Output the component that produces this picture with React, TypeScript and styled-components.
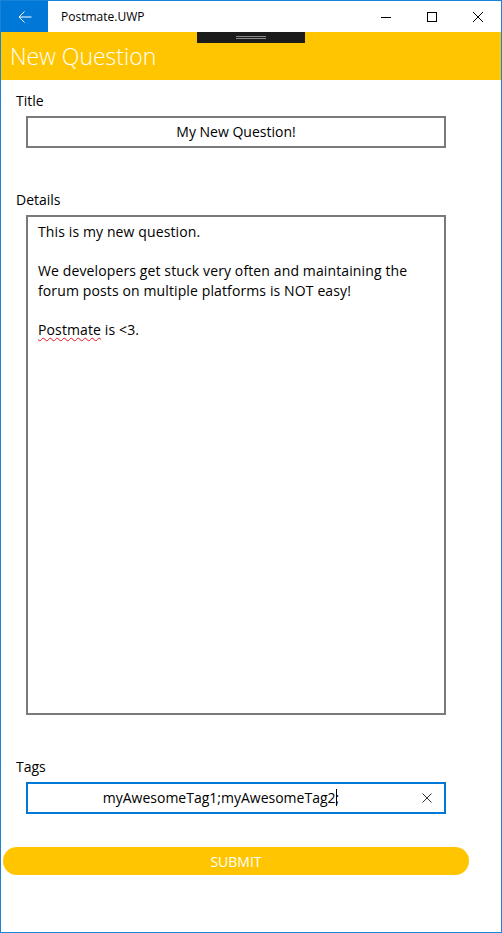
import React from "react";
import styled, { createGlobalStyle } from "styled-components";

const GlobalStyle = createGlobalStyle`
  html, body { margin: 0; padding: 0; background: #ffffff; }
  * { box-sizing: border-box; }
  body { font-family: "Open Sans", "Noto Sans", "DejaVu Sans", sans-serif; color: #000; }
`;

const Window = styled.div`
  position: relative;
  width: 502px;
  height: 933px;
  border: 1px solid #1883d7;
  background: #fff;
  display: flex;
  flex-direction: column;
  overflow: hidden;
`;

const TitleBar = styled.div`
  height: 31px;
  display: flex;
  align-items: stretch;
  background: #fff;
`;

const BackButton = styled.div`
  width: 47px;
  background: #0078d7;
  display: flex;
  align-items: center;
  justify-content: center;
`;

const AppTitle = styled.div`
  margin-left: 13px;
  font-size: 12px;
  line-height: 31px;
  color: #000;
  flex: 1;
`;

const CaptionButton = styled.div`
  width: 46px;
  display: flex;
  align-items: center;
  justify-content: center;
`;

const Header = styled.div`
  position: relative;
  height: 48px;
  background: #ffc500;
  display: flex;
  align-items: center;
  padding-left: 9px;
`;

const HeaderTitle = styled.h1`
  margin: 0;
  font-size: 23px;
  font-weight: 300;
  color: #fff;
  letter-spacing: 0;
`;

const Grip = styled.div`
  position: absolute;
  top: 0;
  left: 196px;
  width: 108px;
  height: 11px;
  background: #1b1b1b;
  display: flex;
  flex-direction: column;
  align-items: center;
  padding-top: 4px;
  gap: 1px;
`;

const GripLine = styled.div`
  width: 30px;
  height: 1px;
  background: #8a8a8a;
`;

const Content = styled.div`
  display: flex;
  flex-direction: column;
  padding: 11px 0 0 15px;
`;

const Label = styled.div<{ $top: number }>`
  margin-top: ${(p) => p.$top}px;
  font-size: 14px;
  line-height: 20px;
  height: 20px;
`;

const Field = styled.div<{ $focused?: boolean; $height: number }>`
  margin: 5px 0 0 10px;
  width: 420px;
  height: ${(p) => p.$height}px;
  border: 2px solid ${(p) => (p.$focused ? "#0078d7" : "#7a7a7a")};
  background: #fff;
  font-size: 14px;
`;

const SingleLine = styled(Field)`
  display: flex;
  align-items: center;
`;

const CenterText = styled.div`
  flex: 1;
  text-align: center;
  line-height: 20px;
  white-space: nowrap;
`;

const Caret = styled.span`
  display: inline-block;
  width: 1px;
  height: 17px;
  background: #000;
  vertical-align: -3px;
  margin-left: -3px;
`;

const ClearButton = styled.div`
  width: 30px;
  display: flex;
  align-items: center;
  justify-content: center;
  margin-right: 2px;
`;

const Multi = styled(Field)`
  padding: 5px 10px;
  line-height: 19.6px;
  letter-spacing: 0.12px;
`;

const Para = styled.p`
  margin: 0;
  min-height: 19.6px;
`;

const Misspelled = styled.span`
  text-decoration: underline wavy #e81123;
  text-decoration-thickness: 1px;
  text-underline-offset: 2px;
`;

const SubmitButton = styled.button`
  margin: 33px 0 0 2px;
  width: 466px;
  height: 28px;
  border: none;
  border-radius: 14px;
  background: #ffc500;
  color: #fff;
  font-family: inherit;
  font-size: 14px;
  padding: 0;
`;

const SubmitRow = styled.div`
  display: flex;
`;

export default function App() {
  return (
    <>
      <GlobalStyle />
      <Window>
        <TitleBar>
          <BackButton>
            <svg width="14" height="12" viewBox="0 0 14 12" fill="none">
              <path d="M13.5 6H1M6.5 0.5L1 6L6.5 11.5" stroke="#fff" strokeWidth="1" />
            </svg>
          </BackButton>
          <AppTitle>Postmate.UWP</AppTitle>
          <CaptionButton>
            <svg width="10" height="10" viewBox="0 0 10 10">
              <path d="M0 5.5H10" stroke="#000" strokeWidth="1" />
            </svg>
          </CaptionButton>
          <CaptionButton>
            <svg width="10" height="10" viewBox="0 0 10 10" fill="none">
              <rect x="0.5" y="0.5" width="9" height="9" stroke="#000" strokeWidth="1" />
            </svg>
          </CaptionButton>
          <CaptionButton>
            <svg width="10" height="10" viewBox="0 0 10 10" fill="none">
              <path d="M0 0L10 10M10 0L0 10" stroke="#000" strokeWidth="1" />
            </svg>
          </CaptionButton>
        </TitleBar>
        <Header>
          <HeaderTitle>New Question</HeaderTitle>
          <Grip>
            <GripLine />
            <GripLine />
          </Grip>
        </Header>
        <Content>
          <Label $top={0}>Title</Label>
          <SingleLine $height={32}>
            <CenterText>My New Question!</CenterText>
          </SingleLine>
          <Label $top={42}>Details</Label>
          <Multi $height={500}>
            <Para>This is my new question.</Para>
            <Para />
            <Para>
              We developers get stuck very often and maintaining the forum posts on multiple platforms is NOT easy!
            </Para>
            <Para />
            <Para>
              <Misspelled>Postmate</Misspelled> is &lt;3.
            </Para>
          </Multi>
          <Label $top={42}>Tags</Label>
          <SingleLine $height={32} $focused>
            <CenterText>
              myAwesomeTag1;myAwesomeTag2;
              <Caret />
            </CenterText>
            <ClearButton>
              <svg width="10" height="10" viewBox="0 0 10 10" fill="none">
                <path d="M0.5 0.5L9.5 9.5M9.5 0.5L0.5 9.5" stroke="#333" strokeWidth="1" />
              </svg>
            </ClearButton>
          </SingleLine>
        </Content>
        <SubmitRow>
          <SubmitButton>SUBMIT</SubmitButton>
        </SubmitRow>
      </Window>
    </>
  );
}
